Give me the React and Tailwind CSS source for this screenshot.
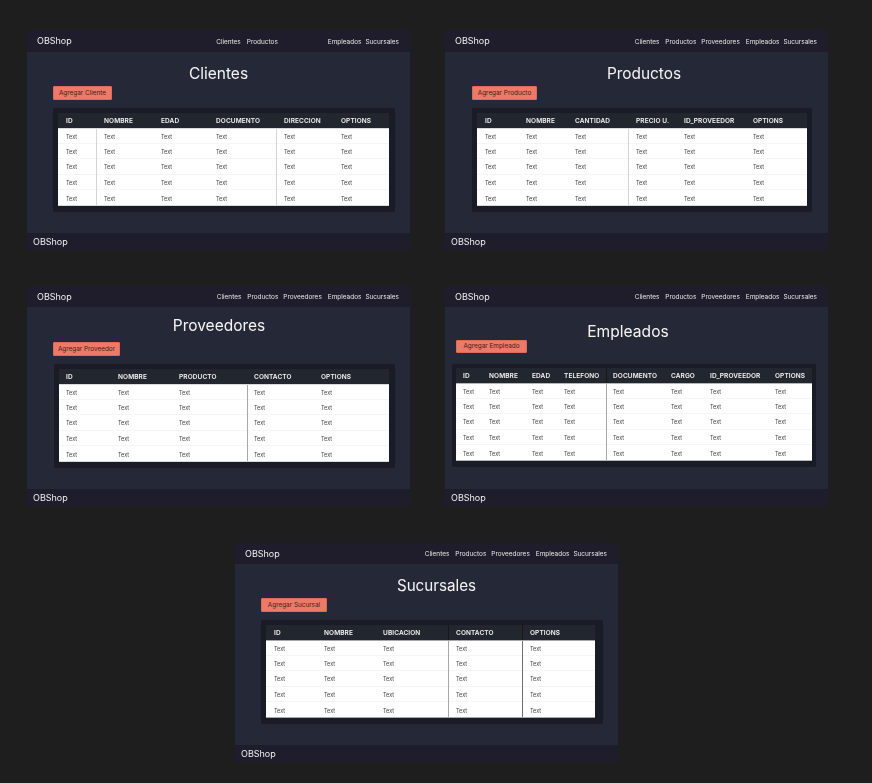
const navFull = [
  { label: "Clientes", className: "" },
  { label: "Productos", className: "ml-[6px]" },
  { label: "Proveedores", className: "ml-[5px]" },
  { label: "Empleados", className: "ml-[6px]" },
  { label: "Sucursales", className: "ml-[4px]" },
];

const navClientes = [
  { label: "Clientes", className: "" },
  { label: "Productos", className: "ml-[6px]" },
  { label: "Empleados", className: "ml-[50px]" },
  { label: "Sucursales", className: "ml-[4px]" },
];

const screens = [
  {
    title: "Clientes",
    nav: navClientes,
    button: "Agregar Cliente",
    frame: "h-[220px]",
    navHeight: "h-[22px]",
    titleBox: "pt-[11px] text-center text-[15.5px]",
    buttonBox: "mt-[3px] ml-[26px] w-[59px] h-[14px]",
    tableBox: "mt-[8px] ml-[26px] w-[342px] pt-[5px] pb-[6px] pl-[5px] pr-[6px]",
    grid: "grid-cols-[38px_57px_55px_68px_57px_1fr]",
    cell: "pl-[8px]",
    cellDiv: "pl-[7px]",
    columns: ["ID", "NOMBRE", "EDAD", "DOCUMENTO", "DIRECCION", "OPTIONS"],
    dividers: { 1: "border-[#d4d4d4]", 4: "border-[#d4d4d4]" },
    headDividers: {},
    bottom: "border-[#d9d9d9]",
  },
  {
    title: "Productos",
    nav: navFull,
    button: "Agregar Producto",
    frame: "h-[220px]",
    navHeight: "h-[22px]",
    titleBox: "pt-[11px] pl-[15px] text-center text-[15.4px]",
    buttonBox: "mt-[3px] ml-[27px] w-[65px] h-[14px]",
    tableBox: "mt-[8px] ml-[27px] w-[340px] pt-[5px] pb-[6px] px-[5px]",
    grid: "grid-cols-[41px_49px_61px_48px_69px_1fr]",
    cell: "pl-[8px]",
    cellDiv: "pl-[7px]",
    columns: ["ID", "NOMBRE", "CANTIDAD", "PRECIO U.", "ID_PROVEEDOR", "OPTIONS"],
    dividers: { 3: "border-[#d4d4d4]" },
    headDividers: {},
    bottom: "border-[#d9d9d9]",
  },
  {
    title: "Proveedores",
    nav: navFull,
    button: "Agregar Proveedor",
    frame: "h-[220px]",
    navHeight: "h-[21px]",
    titleBox: "pt-[8px] pl-px text-center text-[15.5px]",
    buttonBox: "mt-[7px] ml-[26px] w-[67px] h-[14px]",
    tableBox: "mt-[8px] ml-[27px] w-[341px] pt-[5px] pb-[6px] pl-[5px] pr-[6px]",
    grid: "grid-cols-[52px_61px_75px_67px_1fr]",
    cell: "pl-[7px]",
    cellDiv: "pl-[6px]",
    columns: ["ID", "NOMBRE", "PRODUCTO", "CONTACTO", "OPTIONS"],
    dividers: { 3: "border-[#a8a8a8]" },
    headDividers: {},
    bottom: "border-[#d9d9d9]",
  },
  {
    title: "Empleados",
    nav: navFull,
    button: "Agregar Empleado",
    frame: "h-[220px]",
    navHeight: "h-[21px]",
    titleBox: "pt-[14px] pr-[17px] text-center text-[15.6px]",
    buttonBox: "-mt-px ml-[11px] w-[71px] h-[13px]",
    tableBox: "mt-[11px] ml-[7px] w-[364px] pt-[4px] pb-[6px] px-[4px]",
    grid: "grid-cols-[26px_43px_32px_49px_58px_39px_65px_1fr]",
    cell: "pl-[7px]",
    cellDiv: "pl-[6px]",
    columns: ["ID", "NOMBRE", "EDAD", "TELEFONO", "DOCUMENTO", "CARGO", "ID_PROVEEDOR", "OPTIONS"],
    dividers: { 4: "border-[#a8a8a8]" },
    headDividers: { 4: "border-[#15181f]" },
    bottom: "border-[#b5b5b5]",
  },
  {
    title: "Sucursales",
    nav: navFull,
    button: "Agregar Sucursal",
    frame: "h-[219px]",
    navHeight: "h-[21px]",
    titleBox: "pt-[11px] pl-[20px] text-center text-[15.2px]",
    buttonBox: "mt-[3px] ml-[26px] w-[66px] h-[14px]",
    tableBox: "mt-[8px] ml-[26px] w-[342px] pt-[5px] pb-[6px] pl-[5px] pr-[8px]",
    grid: "grid-cols-[50px_59px_73px_74px_1fr]",
    cell: "pl-[8px]",
    cellDiv: "pl-[7px]",
    columns: ["ID", "NOMBRE", "UBICACION", "CONTACTO", "OPTIONS"],
    dividers: { 3: "border-[#a8a8a8]", 4: "border-[#6e6e6e]" },
    headDividers: { 3: "border-[#15181f]", 4: "border-[#15181f]" },
    bottom: "border-[#a8a8a8]",
  },
];

function DataTable({ screen }) {
  const rows = [0, 1, 2, 3, 4];

  return (
    <div className={`rounded-[2px] bg-[#191c26] ${screen.tableBox}`}>
      <div className={`grid h-[14.5px] bg-[#22262e] text-[6.5px] font-semibold text-[#f4f4f4] ${screen.grid}`}>
        {screen.columns.map((col, i) => (
          <div
            key={col}
            className={`flex items-center pt-[2.5px] tracking-[0.1px] grayscale ${screen.headDividers[i] ? "border-l " + screen.headDividers[i] + " " + screen.cellDiv : screen.cell}`}
          >
            {col}
          </div>
        ))}
      </div>
      <div className={`border-t border-b bg-white grayscale ${screen.bottom}`}>
        {rows.map((row) => (
          <div key={row} className={`grid h-[15.4px] text-[5.5px] text-[#444444] ${screen.grid}`}>
            {screen.columns.map((col, i) => (
              <div key={col} className={screen.dividers[i] ? "border-l " + screen.dividers[i] : ""}>
                <div className={`flex h-full items-center pt-[2px] ${screen.dividers[i] ? screen.cellDiv : screen.cell} ${row < 4 ? "border-b border-[#f5f5f5]" : ""}`}>
                  Text
                </div>
              </div>
            ))}
          </div>
        ))}
      </div>
    </div>
  );
}

function Screen({ screen }) {
  return (
    <div className={`flex w-[383px] flex-col bg-[#252836] text-white ${screen.frame}`}>
      <nav className={`flex shrink-0 items-center justify-between bg-[#1f1d2b] pl-[10px] pr-[11px] ${screen.navHeight}`}>
        <span className="text-[9px] text-[#f0f0f0] grayscale">OBShop</span>
        <div className="flex pt-[3px] text-[6.45px] text-[#e4e4e4] grayscale">
          {screen.nav.map((link) => (
            <span key={link.label} className={link.className}>
              {link.label}
            </span>
          ))}
        </div>
      </nav>

      <main className="min-h-0 flex-1">
        <div className={screen.titleBox}>
          <h1 className="h-[20px] leading-[21px] text-[#f4f4f4] grayscale">{screen.title}</h1>
        </div>
        <div className={`flex items-center justify-center rounded-[1px] border border-[#d96c5c] bg-[#ed7a68] pt-px text-[6.4px] text-[#4a1a14] ${screen.buttonBox}`}>
          {screen.button}
        </div>
        <DataTable screen={screen} />
      </main>

      <footer className="flex h-[17px] shrink-0 items-center bg-[#1f1d2b] pl-[6px] text-[9px] text-[#f0f0f0]">
        <span className="grayscale">OBShop</span>
      </footer>
    </div>
  );
}

export default function App() {
  return (
    <div className="h-[783px] w-[872px] overflow-hidden bg-[#1e1e1e] pl-[27px] pt-[30px] font-['Inter',sans-serif]">
      <div className="flex gap-[35px]">
        <Screen screen={screens[0]} />
        <Screen screen={screens[1]} />
      </div>
      <div className="mt-[36px] flex gap-[35px]">
        <Screen screen={screens[2]} />
        <Screen screen={screens[3]} />
      </div>
      <div className="ml-[208px] mt-[37px]">
        <Screen screen={screens[4]} />
      </div>
    </div>
  );
}
